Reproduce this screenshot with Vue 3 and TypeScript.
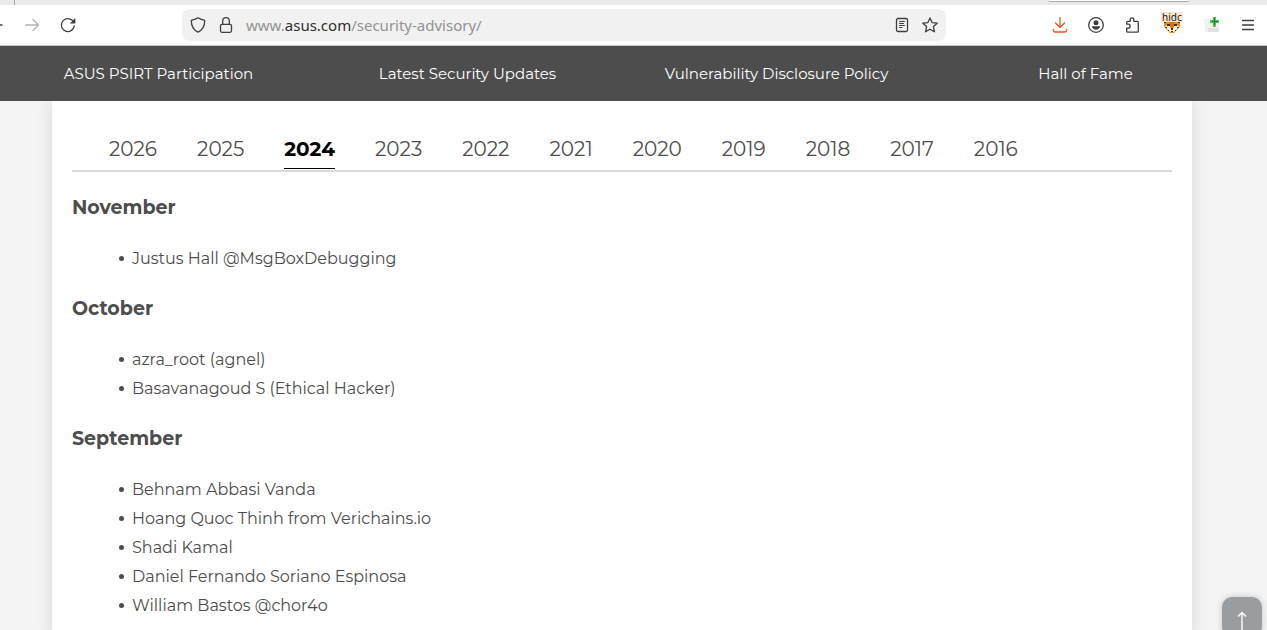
<script setup lang="ts">
import { ref } from 'vue'

interface Month {
  name: string
  people: string[]
}

const sections: string[] = [
  'ASUS PSIRT Participation',
  'Latest Security Updates',
  'Vulnerability Disclosure Policy',
  'Hall of Fame',
]

const years: number[] = [2026, 2025, 2024, 2023, 2022, 2021, 2020, 2019, 2018, 2017, 2016]
const activeYear = ref<number>(2024)

const months: Month[] = [
  { name: 'November', people: ['Justus Hall @MsgBoxDebugging'] },
  { name: 'October', people: ['azra_root (agnel)', 'Basavanagoud S (Ethical Hacker)'] },
  {
    name: 'September',
    people: [
      'Behnam Abbasi Vanda',
      'Hoang Quoc Thinh from Verichains.io',
      'Shadi Kamal',
      'Daniel Fernando Soriano Espinosa',
      'William Bastos @chor4o',
    ],
  },
]
</script>

<template>
  <div class="window">
    <div class="tabstrip"><span class="tab-sep"></span><span class="tab-edge"></span></div>
    <header class="toolbar">
      <div class="history">
        <button class="tool back" aria-label="Back">
          <svg width="16" height="16" viewBox="0 0 16 16"><path d="M14 8H2M8 2L2 8l6 6" /></svg>
        </button>
        <button class="tool muted" aria-label="Forward">
          <svg width="16" height="16" viewBox="0 0 16 16"><path d="M1.500 8h13M9 2.500L14.500 8 9 13.500" /></svg>
        </button>
        <button class="tool" aria-label="Reload">
          <svg width="16" height="16" viewBox="0 0 16 16">
            <path d="M14.300 9A6.500 6.500 0 1 1 12.500 3.500" />
            <path class="solid" d="M15.300 1v5.500H9.800z" />
          </svg>
        </button>
      </div>
      <div class="address">
        <svg width="16" height="16" viewBox="0 0 16 16"><path d="M8 .8C6.300 2.100 4 2.800 1.300 3.400c-.1 5.300 1.900 9.500 6.700 11.800 4.800-2.300 6.800-6.500 6.700-11.800C12 2.800 9.700 2.100 8 .8z" /></svg>
        <svg width="16" height="16" viewBox="0 0 16 16">
          <rect x="2.500" y="7.300" width="11" height="8" rx="1.500" />
          <path d="M4.700 7.300V4a3.300 3.300 0 0 1 6.600 0v3.300" />
        </svg>
        <a class="url" href="#">www.<b>asus.com</b>/security-advisory/</a>
        <button class="tool" aria-label="Reader view">
          <svg width="16" height="16" viewBox="0 0 16 16">
            <rect x="2.500" y="1.500" width="11" height="13" rx="1.500" />
            <path class="thin" d="M5.500 4.500h5M5.500 6.500h4M5.500 8.500h5M5.500 10.500h2.500" />
          </svg>
        </button>
        <button class="tool" aria-label="Bookmark">
          <svg width="16" height="16" viewBox="0 0 16 16"><path d="M8 .9l2.100 4.700 5.100.6-3.800 3.400 1.100 5.200L8 12.200l-4.500 2.600 1.100-5.200L.8 6.200l5.100-.6z" /></svg>
        </button>
      </div>
      <div class="extensions">
        <button class="tool download" aria-label="Downloads">
          <svg width="16" height="16" viewBox="0 0 16 16"><path d="M8 .7v9.800M3.500 6L8 10.500 12.500 6M1.500 12.500v1q0 1.500 1.500 1.500h10q1.500 0 1.500-1.500v-1" /></svg>
        </button>
        <button class="tool" aria-label="Account">
          <svg width="16" height="16" viewBox="0 0 16 16">
            <circle cx="8" cy="8" r="7.300" />
            <circle class="solid" cx="8" cy="5.800" r="2.500" />
            <path class="solid" d="M3.800 9.200h8.400c-.4 2.200-2 3.500-4.200 3.500s-3.800-1.300-4.200-3.500z" />
          </svg>
        </button>
        <button class="tool" aria-label="Extensions">
          <svg width="16" height="16" viewBox="0 0 16 16"><path d="M2.700 7.200V5.300q0-1 1-1h2.500V2.600a1.800 1.800 0 0 1 3.600 0v1.700h3.500q1 0 1 1v8.900q0 1-1 1H3.700q-1 0-1-1v-3.100h1.500a1.900 1.900 0 0 0 0-3.900z" /></svg>
        </button>
        <button class="tool fox" aria-label="Hidden elements">
          <svg width="20" height="16" viewBox="0 0 20 16">
            <path fill="#ef8b16" d="M2 4h16v5l-2 3-4 4H8l-4-4-2-3z" />
            <path fill="#fff3dc" d="M3 9l4-1 3 3 3-3 4 1-3 4-2 2H8l-2-2z" />
            <path fill="#d9730c" d="M8 5h4v5l-2 2-2-2z" />
            <path fill="#4a2b12" d="M5 7h3v2H5zM12 7h3v2h-3zM9 11h2v2H9zM2 5h2v1H2zM16 5h2v1h-2zM3 10h2v1H3zM15 10h2v1h-2zM6 13h1v1H6zM13 13h1v1h-1zM9 14h2v1H9z" />
          </svg>
          <span class="badge">hidc</span>
        </button>
        <button class="tool plus" aria-label="Add">
          <svg width="16" height="16" viewBox="0 0 16 16">
            <path fill="#eff0f0" d="M0 2h7v2h8v11H1V8H0z" />
            <path fill="#e0e3e4" d="M4 11h11v4H4z" />
            <path fill="#52c458" d="M9 0h3v3h3v3h-3v4H9V6H6V3h3z" />
            <path fill="#16851f" d="M10 1h1v3h3v1h-3v3h-1V5H8V4h2z" />
          </svg>
        </button>
        <button class="tool" aria-label="Menu">
          <svg width="16" height="16" viewBox="0 0 16 16"><path d="M2.500 3.500h11M2.500 8h11M2.500 12.500h11" /></svg>
        </button>
      </div>
    </header>

    <div class="page">
      <nav class="sections">
        <a v-for="s in sections" :key="s" href="#">{{ s }}</a>
      </nav>
      <main class="card">
        <div class="years">
          <button
            v-for="y in years"
            :key="y"
            :class="['year', { active: y === activeYear }]"
            @click="activeYear = y"
          >{{ y }}</button>
        </div>
        <section v-for="m in months" :key="m.name" class="month">
          <h3>{{ m.name }}</h3>
          <ul>
            <li v-for="p in m.people" :key="p">{{ p }}</li>
          </ul>
        </section>
      </main>
      <button class="to-top" aria-label="Back to top">
        <svg width="12" height="20" viewBox="0 0 12 20"><path d="M6 20V2M2 5.500L6 1.500l4 4" /></svg>
      </button>
    </div>
  </div>
</template>

<style>
body {
  margin: 0;
  overflow: hidden;
}
</style>

<style scoped>
.window {
  display: flex;
  flex-direction: column;
  height: 100vh;
  overflow: hidden;
  font-family: Montserrat, Inter, "Open Sans", sans-serif;
  color: #4d4d4d;
}
button {
  font: inherit;
  color: inherit;
  background: none;
  border: 0;
  padding: 0;
  margin: 0;
}
a {
  color: inherit;
  text-decoration: none;
}
.tabstrip {
  display: flex;
  justify-content: space-between;
  height: 5px;
  flex: none;
  background: #eaeaea;
  padding: 0 78px 0 14px;
}
.tab-sep {
  width: 1px;
  background: #aaa;
}
.tab-edge {
  box-sizing: border-box;
  width: 141px;
  height: 2px;
  background: #fff;
  border-bottom: 1px solid #aaa;
  border-radius: 0 0 6px 6px;
}
.toolbar {
  display: flex;
  align-items: center;
  justify-content: space-between;
  height: 40px;
  flex: none;
  background: #fff;
  border-bottom: 1px solid #c4c4c4;
  padding-right: 11px;
}
.tool {
  display: flex;
  justify-content: center;
  position: relative;
}
svg {
  display: block;
  flex: none;
}
.toolbar svg {
  fill: none;
  stroke: #3e3e3e;
  stroke-width: 1.300;
  stroke-linecap: round;
  stroke-linejoin: round;
}
.toolbar .solid {
  fill: #3e3e3e;
  stroke: none;
}
.toolbar .thin {
  stroke-width: 1;
}
.history {
  display: flex;
  gap: 20px;
  margin-left: -12px;
}
.toolbar .muted svg {
  stroke: #b4b4b4;
}
.address {
  display: flex;
  align-items: center;
  flex: 0 1 748px;
  height: 32px;
  gap: 12px;
  padding: 0 8px;
  border-radius: 8px;
  background: #f1f1f1;
}
.url {
  flex: 1;
  font: 15px/24px "Noto Sans", sans-serif;
  color: #929292;
}
.url b {
  font-weight: 400;
  color: #2e2e2e;
}
.extensions {
  display: flex;
  gap: 20px;
}
.toolbar .download svg {
  stroke: #e9541f;
}
.toolbar .fox svg,
.toolbar .plus svg {
  stroke: none;
}
.fox {
  width: 24px;
}
.badge {
  position: absolute;
  left: 1px;
  top: -5px;
  padding: 0 1px;
  font: 10px/10px "Noto Sans", sans-serif;
  color: #222;
  background: #fbe6cf;
}
.page {
  display: flex;
  flex-direction: column;
  flex: 1;
  background: #f4f4f4;
}
.sections {
  display: grid;
  grid-template-columns: repeat(4, 1fr);
  padding: 0 27px 0 4px;
  background: #4d4d4d;
  color: #fff;
  font-size: 15px;
  line-height: 55px;
  text-align: center;
  position: relative;
}
.card {
  box-sizing: border-box;
  flex: 1;
  margin: 0 75px 0 52px;
  padding: 29px 20px 0;
  background: #fff;
  box-shadow: 0 0 16px rgba(0, 0, 0, 0.120);
}
.years {
  display: flex;
  gap: 40px;
  padding-left: 37px;
  border-bottom: 2px solid #d9d9d9;
  margin-bottom: 18px;
}
.year {
  font-size: 20px;
  font-weight: 400;
  line-height: 38px;
  border-bottom: 1px solid transparent;
  margin-bottom: 1px;
}
.year.active {
  font-weight: 700;
  color: #000;
  border-bottom-color: #000;
}
.month h3 {
  margin: 0 0 18px;
  font-size: 19px;
  font-weight: 700;
  line-height: 36px;
}
.month ul {
  margin: 0 0 18px;
  padding-left: 47px;
  list-style: none;
  font-size: 16px;
  font-weight: 400;
  line-height: 29px;
}
.month li {
  display: flex;
  align-items: center;
  gap: 8px;
}
.month li::before {
  content: "";
  width: 5px;
  height: 5px;
  border-radius: 50%;
  background: #4d4d4d;
}
.to-top {
  position: fixed;
  right: 5px;
  bottom: -7px;
  display: flex;
  justify-content: center;
  width: 40px;
  height: 40px;
  padding-top: 14px;
  border-radius: 10px;
  background: #9a9da0;
  box-shadow: 0 0 6px rgba(0, 0, 0, 0.200);
}
.to-top svg {
  fill: none;
  stroke: #fff;
  stroke-width: 1.400;
}
</style>
